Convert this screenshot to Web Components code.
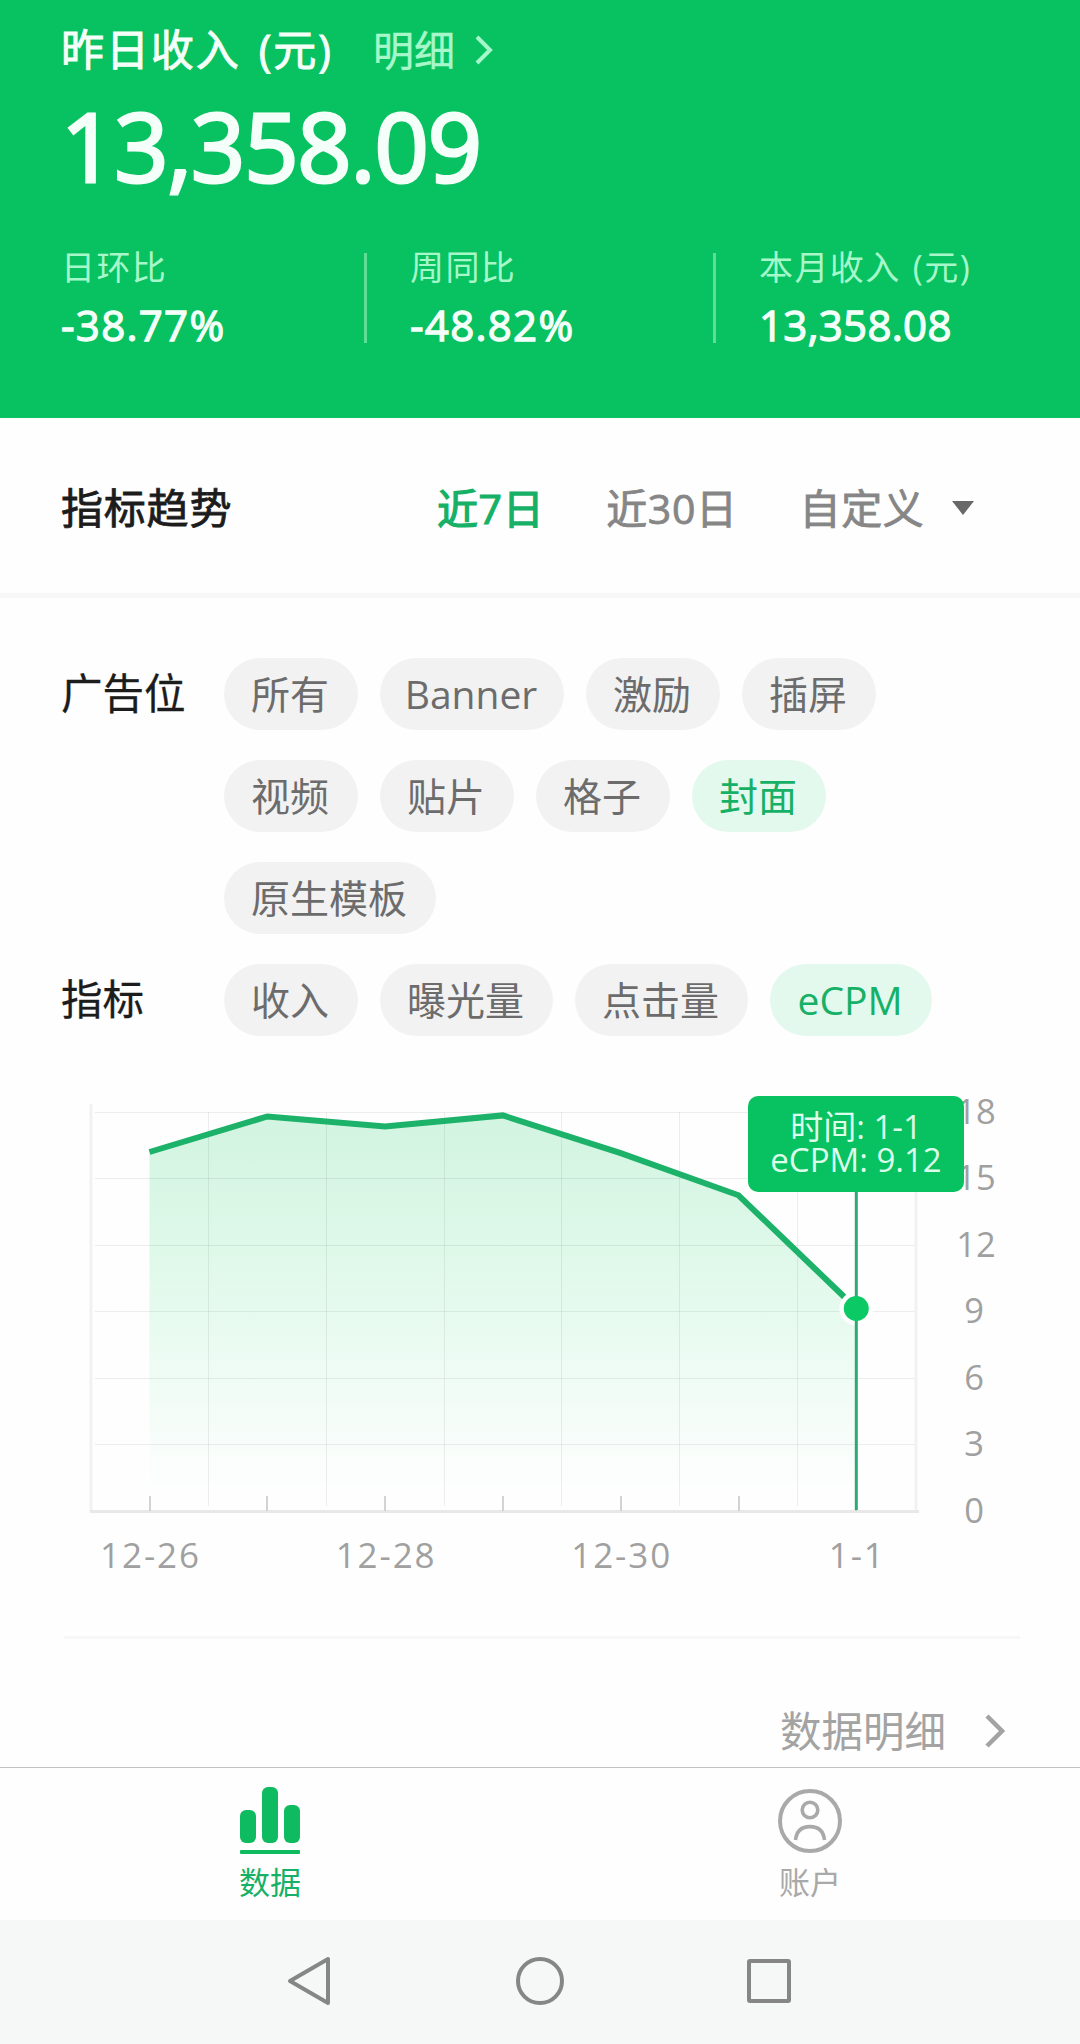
<!DOCTYPE html>
<html lang="zh-CN">
<head>
<meta charset="UTF-8">
<meta name="viewport" content="width=1080">
<title>数据</title>
<style>
  body {
    margin: 0;
    width: 1080px;
    height: 2044px;
    overflow: hidden;
    display: flex;
    flex-direction: column;
    background: #fefefe;
    color: #1c1c1c;
    font-family: "Open Sans", "Noto Sans CJK SC", sans-serif;
    --green: #08c160;
    --green-text: #16b066;
  }
</style>
</head>
<body>
  <revenue-header amount="13,358.09">
    <span slot="title">昨日收入 (元)</span>
    <span slot="more">明细</span>
    <stat-item label="日环比" value="-38.77%"></stat-item>
    <stat-item label="周同比" value="-48.82%"></stat-item>
    <stat-item label="本月收入 (元)" value="13,358.08" spacing="0.3"></stat-item>
  </revenue-header>

  <trend-tabs heading="指标趋势">
    <span class="active">近7日</span>
    <span>近30日</span>
    <span>自定义</span>
  </trend-tabs>

  <filter-panel>
    <filter-row label="广告位">
      <filter-chip>所有</filter-chip>
      <filter-chip style="width: 184px">Banner</filter-chip>
      <filter-chip>激励</filter-chip>
      <filter-chip>插屏</filter-chip>
      <filter-chip>视频</filter-chip>
      <filter-chip>贴片</filter-chip>
      <filter-chip>格子</filter-chip>
      <filter-chip active>封面</filter-chip>
      <filter-chip>原生模板</filter-chip>
    </filter-row>
    <filter-row label="指标">
      <filter-chip>收入</filter-chip>
      <filter-chip>曝光量</filter-chip>
      <filter-chip>点击量</filter-chip>
      <filter-chip active style="width: 162px">eCPM</filter-chip>
    </filter-row>
  </filter-panel>

  <trend-chart></trend-chart>
  <detail-link>数据明细</detail-link>

  <tab-bar>
    <tab-item icon="chart" active>数据</tab-item>
    <tab-item icon="account">账户</tab-item>
  </tab-bar>
  <system-nav></system-nav>

<script>
class RevenueHeader extends HTMLElement {
  constructor() {
    super();
    this.attachShadow({ mode: 'open' });
  }

  connectedCallback() {
    this.shadowRoot.innerHTML = `
      <style>
        :host {
          display: block;
          box-sizing: border-box;
          flex: none;
          height: 418px;
          padding: 20px 0 0 61px;
          background: var(--green);
          color: #f3fff8;
        }
        .top {
          display: flex;
          align-items: center;
          height: 60px;
          line-height: 60px;
          white-space: nowrap;
        }
        .title {
          width: 312px;
          font-size: 43px;
          letter-spacing: 1.9px;
          word-spacing: 5px;
          -webkit-text-stroke: 1px currentColor;
        }
        .more {
          width: 102px;
          font-size: 41px;
          color: #a6f8ca;
          -webkit-text-stroke: 0.4px currentColor;
        }
        .amount {
          height: 110px;
          margin-top: 10px;
          line-height: 110px;
          font-size: 95px;
          letter-spacing: -1.1px;
          -webkit-text-stroke: 3px currentColor;
        }
        .stats {
          display: flex;
          margin-top: 43px;
        }
      </style>
      <div class="top">
        <div class="title"><slot name="title"></slot></div>
        <div class="more"><slot name="more"></slot></div>
        <svg width="18" height="30" viewBox="0 0 18 30" fill="none" stroke="#a6f8ca" stroke-width="4">
          <path d="M2 2L15 15L2 28"/>
        </svg>
      </div>
      <div class="amount">${this.getAttribute('amount')}</div>
      <div class="stats"><slot></slot></div>
    `;
  }
}

class StatItem extends HTMLElement {
  constructor() {
    super();
    this.attachShadow({ mode: 'open' });
  }

  connectedCallback() {
    this.shadowRoot.innerHTML = `
      <style>
        :host {
          display: flex;
          flex: none;
          width: 349px;
          white-space: nowrap;
        }
        .text {
          width: 303px;
        }
        .label {
          height: 48px;
          line-height: 48px;
          font-size: 34px;
          letter-spacing: 1.4px;
          word-spacing: 2px;
          color: #a6f8ca;
        }
        .value {
          height: 50px;
          margin-top: 9px;
          line-height: 50px;
          font-size: 42px;
          letter-spacing: ${this.getAttribute('spacing') || 1.3}px;
          -webkit-text-stroke: 1.3px currentColor;
        }
        .line {
          width: 3px;
          height: 90px;
          margin-top: 10px;
          background: #5ddd95;
        }
        :host(:last-child) .line {
          display: none;
        }
      </style>
      <div class="text">
        <div class="label">${this.getAttribute('label')}</div>
        <div class="value">${this.getAttribute('value')}</div>
      </div>
      <div class="line"></div>
    `;
  }
}

class TrendTabs extends HTMLElement {
  constructor() {
    super();
    this.attachShadow({ mode: 'open' });
  }

  connectedCallback() {
    this.shadowRoot.innerHTML = `
      <style>
        :host {
          display: flex;
          box-sizing: border-box;
          flex: none;
          align-items: center;
          height: 180px;
          padding: 4px 106px 0 61px;
          border-bottom: 5px solid #f7f7f7;
          font-size: 41px;
          line-height: 60px;
          white-space: nowrap;
          -webkit-text-stroke: 0.8px currentColor;
        }
        .heading {
          width: 376px;
          font-size: 42px;
          letter-spacing: 0.8px;
        }
        .tabs {
          display: flex;
          flex: 1;
          gap: 62px;
          letter-spacing: 0.6px;
        }
        ::slotted(span) {
          color: #868686;
        }
        ::slotted(.active) {
          color: var(--green-text);
          -webkit-text-stroke: 1.2px currentColor;
        }
      </style>
      <div class="heading">${this.getAttribute('heading')}</div>
      <div class="tabs"><slot></slot></div>
      <svg width="22" height="14" viewBox="0 0 22 14"><path d="M0 0H22L11 14Z" fill="#686868"/></svg>
    `;
  }
}

class FilterPanel extends HTMLElement {
  constructor() {
    super();
    this.attachShadow({ mode: 'open' });
    this.shadowRoot.innerHTML = `
      <style>
        :host {
          display: flex;
          flex: none;
          flex-direction: column;
          gap: 30px;
          padding: 60px 61px 0;
        }
      </style>
      <slot></slot>
    `;
  }
}

class FilterRow extends HTMLElement {
  constructor() {
    super();
    this.attachShadow({ mode: 'open' });
  }

  connectedCallback() {
    this.shadowRoot.innerHTML = `
      <style>
        :host {
          display: flex;
        }
        .label {
          flex: none;
          width: 163px;
          font-size: 41.5px;
          line-height: 70px;
          -webkit-text-stroke: 0.3px currentColor;
        }
        .chips {
          display: flex;
          flex-wrap: wrap;
          gap: 30px 22px;
          width: 720px;
        }
      </style>
      <div class="label">${this.getAttribute('label')}</div>
      <div class="chips"><slot></slot></div>
    `;
  }
}

class FilterChip extends HTMLElement {
  constructor() {
    super();
    this.attachShadow({ mode: 'open' });
    this.shadowRoot.innerHTML = `
      <style>
        :host {
          display: flex;
          box-sizing: border-box;
          justify-content: center;
          height: 72px;
          padding: 0 29px 0 27px;
          border-radius: 36px;
          background: #f2f2f2;
          color: #6c6c6c;
          font-size: 39px;
          line-height: 71px;
        }
        :host([active]) {
          background: #e3f9ed;
          color: var(--green-text);
        }
      </style>
      <slot></slot>
    `;
  }
}

class TrendChart extends HTMLElement {
  constructor() {
    super();
    this.attachShadow({ mode: 'open' });
    this.days = ['12-26', '12-27', '12-28', '12-29', '12-30', '12-31', '1-1'];
    this.values = [16.2, 17.8, 17.35, 17.85, 16.15, 14.25, 9.15];
  }

  connectedCallback() {
    this.render();
  }

  x(i) {
    return 149.5 + i * 117.8;
  }

  y(value) {
    return 475.5 - value * 22.19;
  }

  render() {
    const points = this.values.map((v, i) => `${this.x(i).toFixed(1)},${this.y(v).toFixed(1)}`);
    const last = this.values.length - 1;
    const lastX = this.x(last).toFixed(1);
    const lastY = this.y(this.values[last]).toFixed(1);

    const rows = [3, 6, 9, 12, 15, 18].map(v => `<path d="M95 ${Math.floor(this.y(v)) + 0.5}H916"/>`);
    const cols = [0, 1, 2, 3, 4, 5].map(i => `<path d="M${Math.floor(this.x(i + 0.5)) + 0.5} 76V470"/>`);
    const ticks = this.days.map((d, i) => `<path d="M${Math.round(this.x(i))} 460V475"/>`);
    const xLabels = this.days.map((d, i) =>
      i % 2 ? '' : `<text x="${this.x(i) + 1}" y="532" font-size="35" letter-spacing="1.9">${d}</text>`
    );
    const yLabels = [18, 15, 12, 9, 6, 3, 0].map(v =>
      `<text x="${v > 9 ? 976 : 974}" y="${this.y(v) + 11.5}" font-size="34.5">${v}</text>`
    );

    this.shadowRoot.innerHTML = `
      <style>
        :host {
          display: block;
          position: relative;
          flex: none;
          height: 600px;
        }
        svg {
          display: block;
        }
        text {
          fill: #a0a0a0;
          text-anchor: middle;
        }
        .tooltip {
          position: absolute;
          left: 748px;
          top: 60px;
          box-sizing: border-box;
          width: 216px;
          height: 96px;
          padding-top: 14px;
          border-radius: 10px;
          background: var(--green);
          color: #dcffea;
          font-size: 33px;
          line-height: 33px;
          text-align: center;
          white-space: nowrap;
        }
      </style>
      <svg width="1080" height="600" viewBox="0 0 1080 600">
        <defs>
          <linearGradient id="area" gradientUnits="userSpaceOnUse" x1="0" y1="80" x2="0" y2="460">
            <stop offset="0" stop-color="#d2f4e1"/>
            <stop offset="0.4" stop-color="#e0f9ea"/>
            <stop offset="0.75" stop-color="#f2fcf7"/>
            <stop offset="1" stop-color="#fefefe"/>
          </linearGradient>
        </defs>
        <polygon points="${points.join(' ')} ${lastX},475 ${this.x(0)},475" fill="url(#area)"/>
        <g stroke="#000" stroke-opacity="0.065">${rows.join('')}${cols.join('')}</g>
        <path d="M91 68V476M916 76V476" stroke="#f1f1f1" stroke-width="3"/>
        <path d="M90 475.5H919" stroke="#e8e8e8" stroke-width="3"/>
        <g stroke="#c4c4c4" stroke-width="1.5">${ticks.join('')}</g>
        <polyline points="${points.join(' ')}" fill="none" stroke="#1cb269" stroke-width="6"/>
        <circle cx="${lastX}" cy="${lastY}" r="17" fill="#fefefe"/>
        <path d="M${lastX} 150V474" stroke="#2bab72" stroke-width="3"/>
        <circle cx="${lastX}" cy="${lastY}" r="12.5" fill="#0bca66"/>
        ${xLabels.join('')}
        ${yLabels.join('')}
      </svg>
      <div class="tooltip">
        <div>时间: 1-1</div>
        <div>eCPM: 9.12</div>
      </div>
    `;
  }
}

class DetailLink extends HTMLElement {
  constructor() {
    super();
    this.attachShadow({ mode: 'open' });
    this.shadowRoot.innerHTML = `
      <style>
        :host {
          display: flex;
          box-sizing: border-box;
          flex: none;
          justify-content: flex-end;
          align-items: center;
          height: 131px;
          margin: 0 60px 0 64px;
          padding: 56px 15px 0 0;
          border-top: 3px solid #f7f7f7;
          color: #a3a3a3;
          font-size: 41.5px;
          line-height: 60px;
        }
        svg {
          margin-left: 39px;
        }
      </style>
      <slot></slot>
      <svg width="20" height="34" viewBox="0 0 20 34" fill="none" stroke="#a3a3a3" stroke-width="4.5">
        <path d="M2 2L17 17L2 32"/>
      </svg>
    `;
  }
}

class TabBar extends HTMLElement {
  constructor() {
    super();
    this.attachShadow({ mode: 'open' });
    this.shadowRoot.innerHTML = `
      <style>
        :host {
          display: flex;
          box-sizing: border-box;
          flex: none;
          height: 153px;
          border-top: 1px solid #c2c2c2;
        }
      </style>
      <slot></slot>
    `;
  }
}

const TAB_ICONS = {
  chart: `
    <rect x="2" y="26" width="16" height="33" rx="6"/>
    <rect x="24" y="3" width="16" height="56" rx="6"/>
    <rect x="46" y="21" width="16" height="38" rx="6"/>
    <rect x="2" y="66" width="60" height="4" rx="1"/>
  `,
  account: `
    <g fill="none" stroke="currentColor" stroke-width="4">
      <circle cx="32" cy="37" r="30"/>
      <circle cx="32" cy="26" r="7.8" stroke-width="3.6"/>
      <path d="M17.5 56C18.5 47 24 42.6 32 42.6S45.5 47 46.5 56" stroke-width="3.6"/>
    </g>
  `
};

class TabItem extends HTMLElement {
  constructor() {
    super();
    this.attachShadow({ mode: 'open' });
  }

  connectedCallback() {
    this.shadowRoot.innerHTML = `
      <style>
        :host {
          display: flex;
          flex: 1;
          flex-direction: column;
          align-items: center;
          padding-top: 16px;
          color: #a9a9a9;
          font-size: 31px;
          line-height: 42px;
        }
        :host([active]) {
          color: var(--green-text);
        }
        svg {
          margin-bottom: 3px;
        }
        :host([active]) svg {
          color: #0fbb60;
        }
      </style>
      <svg width="64" height="74" viewBox="0 0 64 74" fill="currentColor">${TAB_ICONS[this.getAttribute('icon')]}</svg>
      <div><slot></slot></div>
    `;
  }
}

class SystemNav extends HTMLElement {
  constructor() {
    super();
    this.attachShadow({ mode: 'open' });
    this.shadowRoot.innerHTML = `
      <style>
        :host {
          display: flex;
          flex: 1;
          justify-content: center;
          align-items: center;
          gap: 180px;
          padding-bottom: 2px;
          background: #f6f7f7;
        }
        svg {
          fill: none;
          stroke: #868686;
          stroke-width: 4;
          stroke-linejoin: round;
        }
      </style>
      <svg width="50" height="50" viewBox="0 0 50 50"><path d="M5 25L43 3V47Z"/></svg>
      <svg width="50" height="50" viewBox="0 0 50 50"><circle cx="25" cy="25" r="22"/></svg>
      <svg width="50" height="50" viewBox="0 0 50 50"><rect x="4" y="5" width="40" height="40" rx="1"/></svg>
    `;
  }
}

customElements.define('revenue-header', RevenueHeader);
customElements.define('stat-item', StatItem);
customElements.define('trend-tabs', TrendTabs);
customElements.define('filter-panel', FilterPanel);
customElements.define('filter-row', FilterRow);
customElements.define('filter-chip', FilterChip);
customElements.define('trend-chart', TrendChart);
customElements.define('detail-link', DetailLink);
customElements.define('tab-bar', TabBar);
customElements.define('tab-item', TabItem);
customElements.define('system-nav', SystemNav);
</script>
</body>
</html>
